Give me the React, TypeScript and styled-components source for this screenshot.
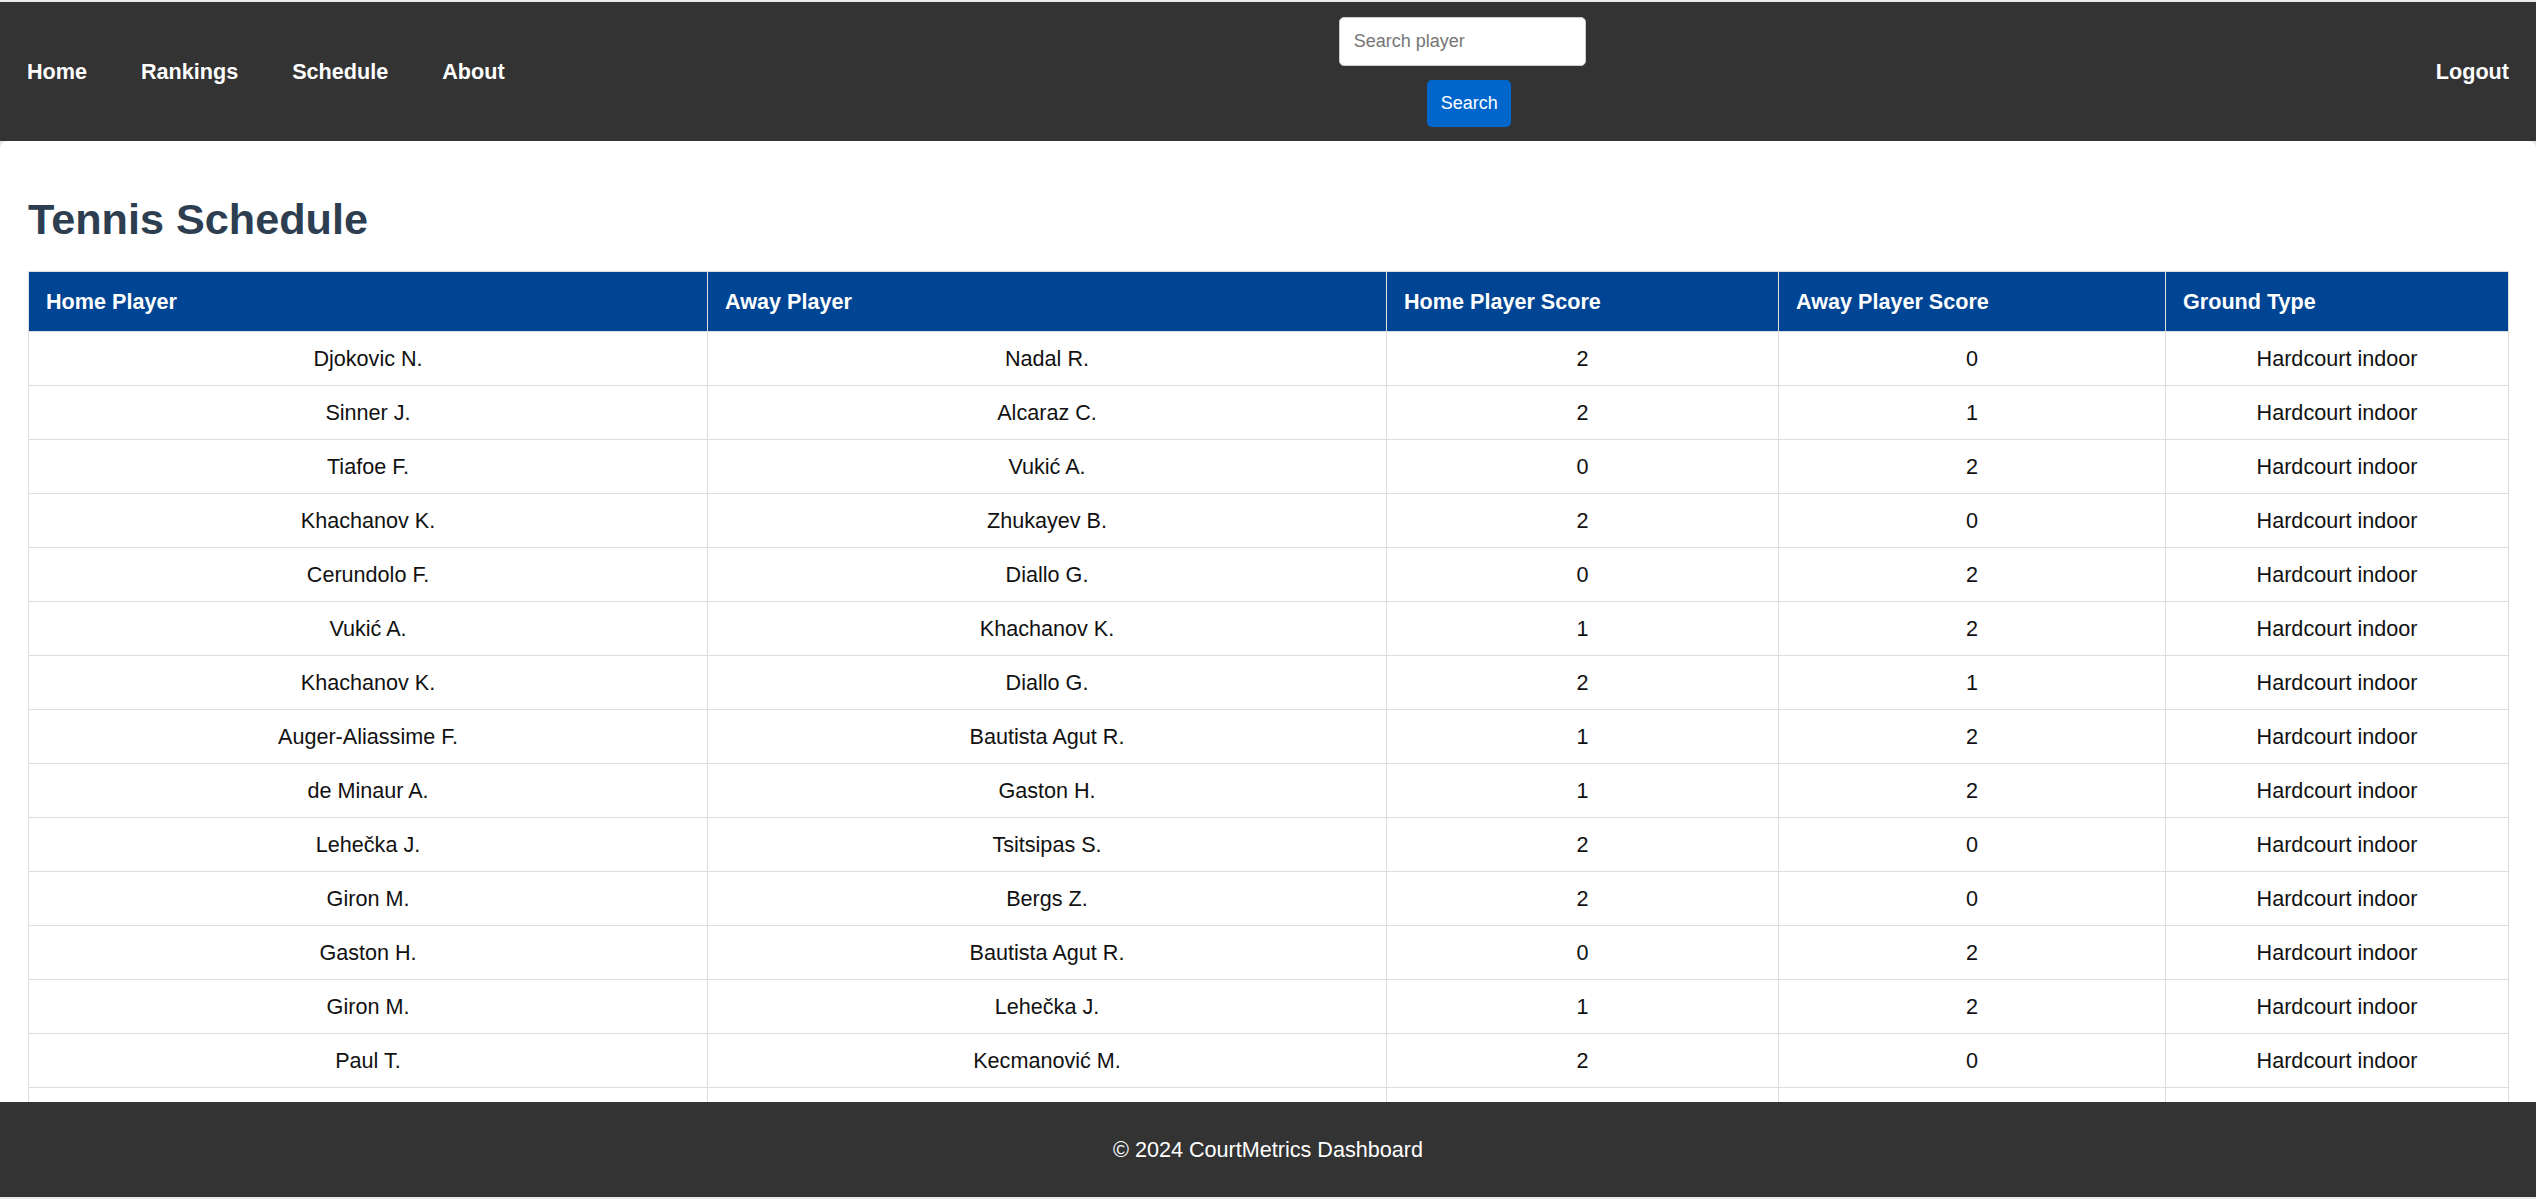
import React from 'react';
import styled, { createGlobalStyle } from 'styled-components';

const GlobalStyle = createGlobalStyle`
  html, body {
    margin: 0;
    height: 100%;
    overflow: hidden;
    background: #e9e9eb;
    font-family: "Liberation Sans", Arial, sans-serif;
  }
  #root {
    height: 100%;
  }
`;

type Match = {
  home: string;
  away: string;
  homeScore: number;
  awayScore: number;
  ground: string;
};

const matches: Match[] = [
  { home: 'Djokovic N.', away: 'Nadal R.', homeScore: 2, awayScore: 0, ground: 'Hardcourt indoor' },
  { home: 'Sinner J.', away: 'Alcaraz C.', homeScore: 2, awayScore: 1, ground: 'Hardcourt indoor' },
  { home: 'Tiafoe F.', away: 'Vukić A.', homeScore: 0, awayScore: 2, ground: 'Hardcourt indoor' },
  { home: 'Khachanov K.', away: 'Zhukayev B.', homeScore: 2, awayScore: 0, ground: 'Hardcourt indoor' },
  { home: 'Cerundolo F.', away: 'Diallo G.', homeScore: 0, awayScore: 2, ground: 'Hardcourt indoor' },
  { home: 'Vukić A.', away: 'Khachanov K.', homeScore: 1, awayScore: 2, ground: 'Hardcourt indoor' },
  { home: 'Khachanov K.', away: 'Diallo G.', homeScore: 2, awayScore: 1, ground: 'Hardcourt indoor' },
  { home: 'Auger-Aliassime F.', away: 'Bautista Agut R.', homeScore: 1, awayScore: 2, ground: 'Hardcourt indoor' },
  { home: 'de Minaur A.', away: 'Gaston H.', homeScore: 1, awayScore: 2, ground: 'Hardcourt indoor' },
  { home: 'Lehečka J.', away: 'Tsitsipas S.', homeScore: 2, awayScore: 0, ground: 'Hardcourt indoor' },
  { home: 'Giron M.', away: 'Bergs Z.', homeScore: 2, awayScore: 0, ground: 'Hardcourt indoor' },
  { home: 'Gaston H.', away: 'Bautista Agut R.', homeScore: 0, awayScore: 2, ground: 'Hardcourt indoor' },
  { home: 'Giron M.', away: 'Lehečka J.', homeScore: 1, awayScore: 2, ground: 'Hardcourt indoor' },
  { home: 'Paul T.', away: 'Kecmanović M.', homeScore: 2, awayScore: 0, ground: 'Hardcourt indoor' },
  { home: 'Tsitsipas S.', away: 'Sinner J.', homeScore: 0, awayScore: 2, ground: 'Hardcourt indoor' },
  { home: 'Bergs Z.', away: 'Paul T.', homeScore: 1, awayScore: 2, ground: 'Hardcourt indoor' },
];

const columns = [
  { title: 'Home Player', width: 679 },
  { title: 'Away Player', width: 679 },
  { title: 'Home Player Score', width: 392 },
  { title: 'Away Player Score', width: 387 },
  { title: 'Ground Type', width: 343 },
];

const Shell = styled.div`
  height: 100vh;
  box-sizing: border-box;
  padding: 2px 0;
  display: flex;
  flex-direction: column;
`;

const NavBar = styled.header`
  flex-shrink: 0;
  height: 139px;
  background: #333333;
  padding: 0 27px;
  display: flex;
  align-items: center;
  justify-content: space-between;
`;

const NavLinks = styled.nav`
  display: flex;
  gap: 54px;
`;

const NavLink = styled.a`
  color: #ffffff;
  font-size: 21.6px;
  font-weight: bold;
  text-decoration: none;
  cursor: pointer;
`;

const SearchForm = styled.form`
  width: 247px;
  margin-right: 16px;
  display: flex;
  flex-direction: column;
  align-items: center;
  gap: 14px;
`;

const SearchInput = styled.input`
  width: 100%;
  height: 49px;
  box-sizing: border-box;
  border: 1px solid #cccccc;
  border-radius: 5px;
  padding: 0 14px;
  font-family: inherit;
  font-size: 18px;
  color: #333;
  outline: none;

  &::placeholder {
    color: #757575;
  }
`;

const SearchButton = styled.button`
  margin-left: 14px;
  height: 47px;
  padding: 0 13.5px;
  border: none;
  border-radius: 5px;
  background: #0066cc;
  color: #ffffff;
  font-family: inherit;
  font-size: 18px;
  cursor: pointer;
`;

const Main = styled.main`
  flex: 1;
  min-height: 0;
  overflow: hidden;
  background: #ffffff;
  border-radius: 8px 8px 0 0;
  padding: 25px 28px 0;
`;

const Title = styled.h1`
  margin: 29px 0 27px;
  font-size: 43.2px;
  font-weight: bold;
  color: #2c3e50;
`;

const Table = styled.table`
  width: 100%;
  table-layout: fixed;
  border-collapse: collapse;
  font-size: 21.6px;
`;

const HeadCell = styled.th`
  height: 59px;
  padding: 0 17px;
  background: #004494;
  color: #ffffff;
  font-weight: bold;
  text-align: left;
  border: 1px solid #dddddd;
`;

const Cell = styled.td`
  height: 53px;
  padding: 0 17px;
  color: #111111;
  text-align: center;
  border: 1px solid #dddddd;
`;

const Footer = styled.footer`
  flex-shrink: 0;
  height: 95px;
  background: #333333;
  color: #ffffff;
  font-size: 21.6px;
  display: flex;
  align-items: center;
  justify-content: center;
`;

export default function App() {
  return (
    <>
      <GlobalStyle />
      <Shell>
        <NavBar>
          <NavLinks>
            <NavLink>Home</NavLink>
            <NavLink>Rankings</NavLink>
            <NavLink>Schedule</NavLink>
            <NavLink>About</NavLink>
          </NavLinks>
          <SearchForm onSubmit={(e) => e.preventDefault()}>
            <SearchInput type="text" placeholder="Search player" />
            <SearchButton type="submit">Search</SearchButton>
          </SearchForm>
          <NavLink>Logout</NavLink>
        </NavBar>
        <Main>
          <Title>Tennis Schedule</Title>
          <Table>
            <colgroup>
              {columns.map((c) => (
                <col key={c.title} style={{ width: c.width }} />
              ))}
            </colgroup>
            <thead>
              <tr>
                {columns.map((c) => (
                  <HeadCell key={c.title}>{c.title}</HeadCell>
                ))}
              </tr>
            </thead>
            <tbody>
              {matches.map((m, i) => (
                <tr key={i}>
                  <Cell>{m.home}</Cell>
                  <Cell>{m.away}</Cell>
                  <Cell>{m.homeScore}</Cell>
                  <Cell>{m.awayScore}</Cell>
                  <Cell>{m.ground}</Cell>
                </tr>
              ))}
            </tbody>
          </Table>
        </Main>
        <Footer>© 2024 CourtMetrics Dashboard</Footer>
      </Shell>
    </>
  );
}
